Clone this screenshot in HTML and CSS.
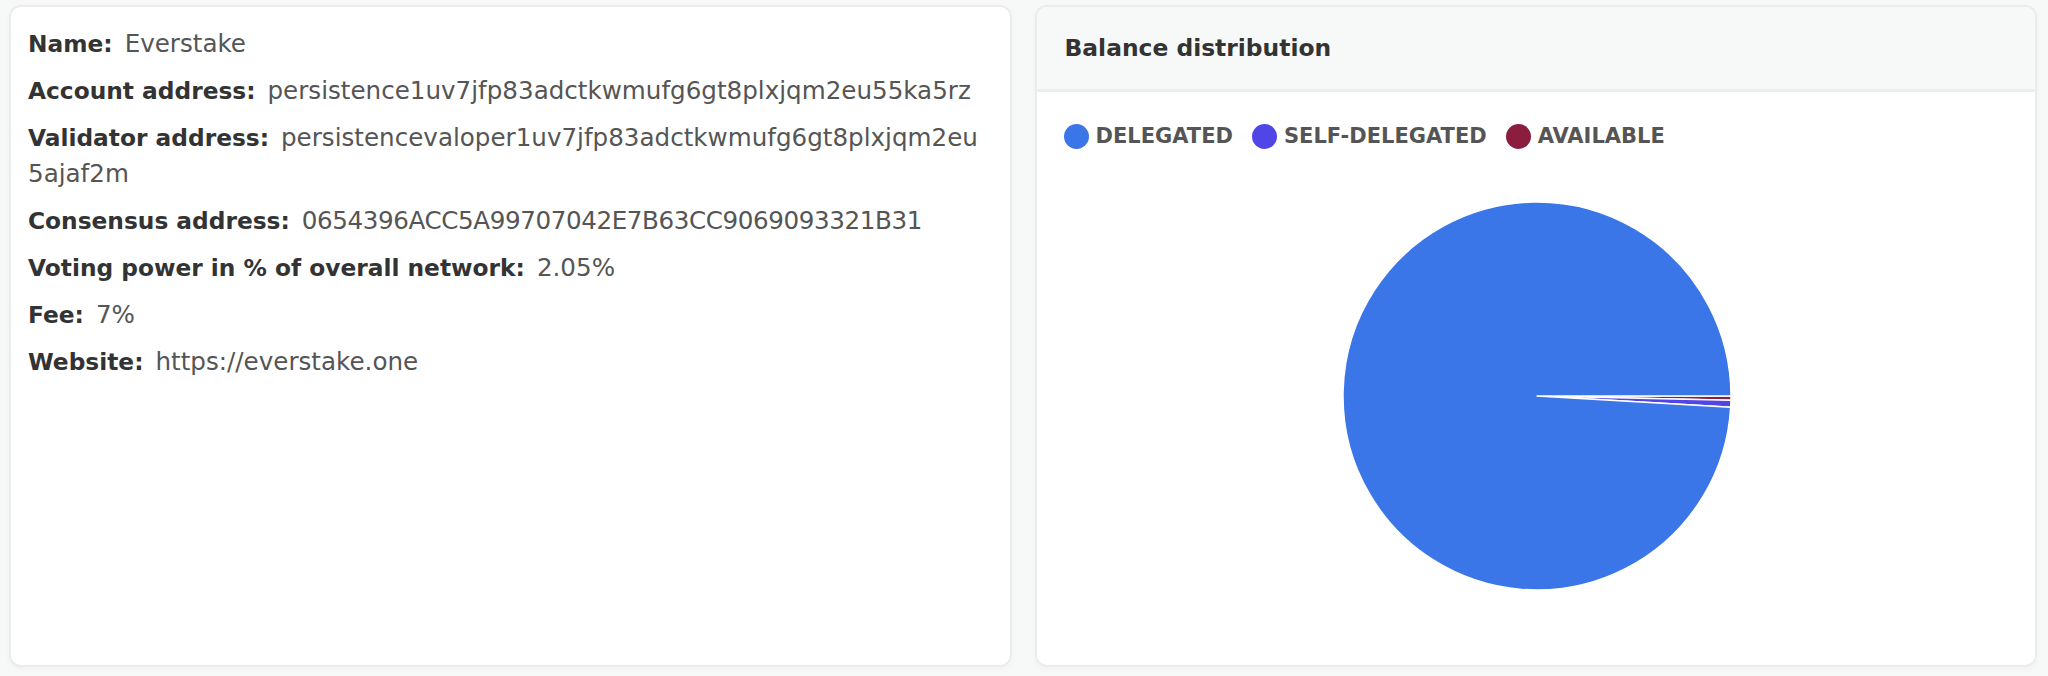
FILE: index.html
```html
<!DOCTYPE html>
<html lang="en">
<head>
    <meta charset="UTF-8">
    <meta name="viewport" content="width=device-width, initial-scale=1.0">
    <title>Validator</title>
    <link rel="stylesheet" href="styles.css">
</head>
<body>

<div id="container">
    <div class="card info-card">
        <div class="info-row"><span class="label">Name:</span><span class="value">Everstake</span></div>
        <div class="info-row"><span class="label">Account address:</span><span class="value">persistence1uv7jfp83adctkwmufg6gt8plxjqm2eu55ka5rz</span></div>
        <div class="info-row"><span class="label">Validator address:</span><span class="value">persistencevaloper1uv7jfp83adctkwmufg6gt8plxjqm2eu5ajaf2m</span></div>
        <div class="info-row"><span class="label">Consensus address:</span><span class="value hash">0654396ACC5A99707042E7B63CC9069093321B31</span></div>
        <div class="info-row"><span class="label">Voting power in % of overall network:</span><span class="value">2.05%</span></div>
        <div class="info-row"><span class="label">Fee:</span><span class="value">7%</span></div>
        <div class="info-row"><span class="label">Website:</span><span class="value">https://everstake.one</span></div>
    </div>

    <div class="card chart-card">
        <div class="card-header">Balance distribution</div>
        <div class="card-body">
            <ul class="legend">
                <li><span class="dot delegated"></span>DELEGATED</li>
                <li><span class="dot self-delegated"></span>SELF-DELEGATED</li>
                <li><span class="dot available"></span>AVAILABLE</li>
            </ul>
            <div class="pie">
                <!-- slices start at 3 o'clock and go clockwise -->
                <svg width="392" height="392" viewBox="-196 -196 392 392">
                    <path class="slice-available" d="M0 0 L194 0 A194 194 0 0 1 193.95 4.23 Z"/>
                    <path class="slice-self" d="M0 0 L193.95 4.23 A194 194 0 0 1 193.68 11.17 Z"/>
                    <path class="slice-delegated" d="M0 0 L193.68 11.17 A194 194 0 1 1 194 0 Z"/>
                </svg>
            </div>
        </div>
    </div>
</div>

</body>
</html>
```

FILE: styles.css
```css
body {
    font-family: 'DejaVu Sans', sans-serif;
    margin: 0;
    padding: 5px 11px 9px 9px;
    background-color: #f7f9f9;
    color: #333;
}
#container {
    display: grid;
    grid-template-columns: 1fr 1fr;
    gap: 23px;
    height: 662px;
}
.card {
    background-color: #fff;
    border: 2px solid #ececec;
    border-radius: 12px;
    box-shadow: 0 2px 6px rgba(0, 0, 0, 0.03);
    overflow: hidden;
}
.info-card {
    padding: 19px 17px;
}
.info-row {
    font-size: 24px;
    line-height: 35px;
    margin-bottom: 11px;
}
.label {
    font-size: 23.3px;
    font-weight: bold;
    color: #333;
    margin-right: 12px;
}
.value {
    font-size: 24.6px;
    color: #555;
    word-break: break-all;
}
.hash {
    letter-spacing: -0.4px;
}
.card-header {
    background-color: #f7f8f8;
    border-bottom: 3px solid #eeeeee;
    height: 85px;
    box-sizing: border-box;
    padding: 0 28px;
    display: flex;
    align-items: center;
    font-size: 23.4px;
    font-weight: bold;
    color: #333;
}
.card-body {
    padding: 0 25px 0 27px;
}
.legend {
    list-style-type: none;
    margin: 0;
    padding: 0;
    display: flex;
    gap: 19px;
    height: 88px;
    align-items: center;
    font-size: 21px;
    font-weight: bold;
    color: #555;
}
.legend li {
    display: flex;
    align-items: center;
    gap: 7px;
}
.dot {
    width: 25px;
    height: 25px;
    border-radius: 50%;
}
.delegated {
    background-color: #3b76e8;
}
.self-delegated {
    background-color: #5046e8;
}
.available {
    background-color: #8b1d3e;
}
.pie {
    display: flex;
    justify-content: center;
    margin-top: 20px;
}
.pie path {
    stroke: #fff;
    stroke-width: 1.5;
    stroke-linejoin: round;
}
.slice-delegated {
    fill: #3b76e8;
}
.slice-self {
    fill: #5046e8;
}
.slice-available {
    fill: #8b1d3e;
}
```
